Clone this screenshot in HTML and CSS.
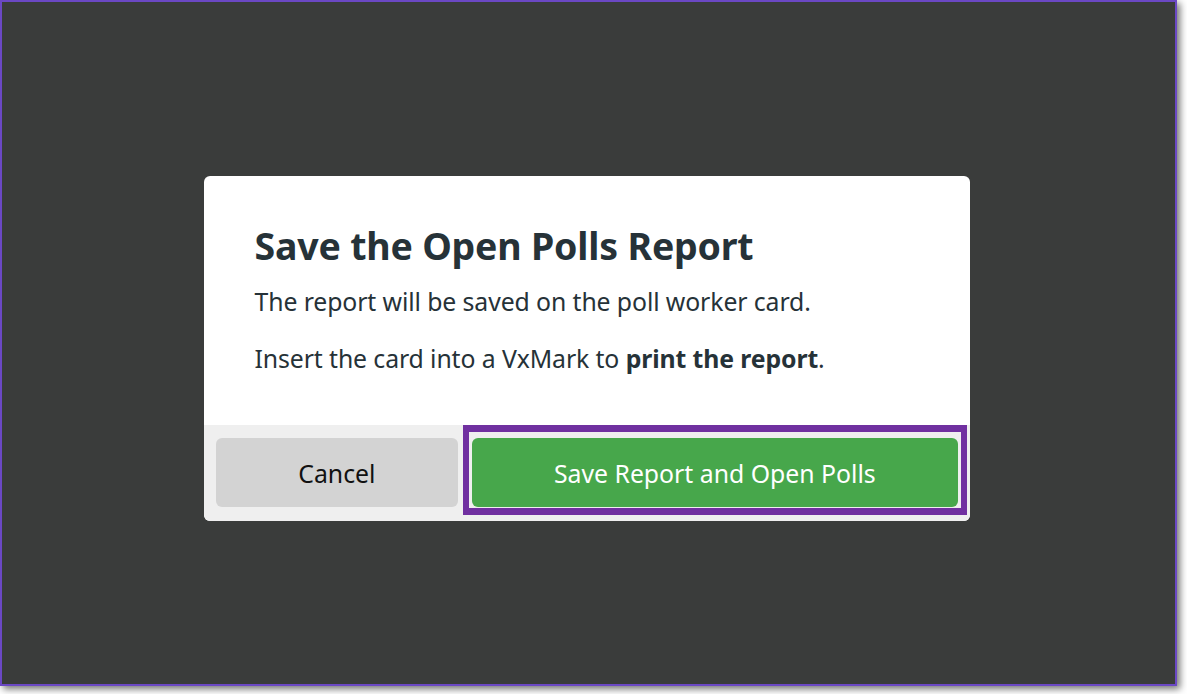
FILE: index.html
```html
<!DOCTYPE html>
<html lang="en">
<head>
<meta charset="utf-8">
<title>Save the Open Polls Report</title>
<link rel="stylesheet" href="styles.css">
</head>
<body>
<div class="frame">
  <div class="modal" role="dialog">
    <div class="modal-content">
      <h1 class="title">Save the Open Polls Report</h1>
      <p class="text">The report will be saved on the poll worker card.</p>
      <p class="text">Insert the card into a VxMark to <strong>print the report</strong>.</p>
    </div>
    <div class="modal-actions">
      <button class="btn btn-cancel" type="button">Cancel</button>
      <button class="btn btn-primary is-focused" type="button">Save Report and Open Polls</button>
    </div>
  </div>
</div>
</body>
</html>
```

FILE: styles.css
```css
* { box-sizing: border-box; }

html, body {
  margin: 0;
  padding: 0;
  background: #ffffff;
}

body {
  width: 1187px;
  height: 694px;
  font-family: "Noto Sans", "Open Sans", "DejaVu Sans", sans-serif;
}

.frame {
  width: 1177px;
  height: 686px;
  background: #3a3c3b;
  border: 2px solid #6b48c4;
  box-shadow: 3px 3px 7px rgba(0, 0, 0, 0.55);
  display: flex;
  justify-content: center;
  align-items: flex-start;
  padding-top: 174px;
}

.modal {
  width: 766px;
  margin-left: -4px;
  background: #ffffff;
  border-radius: 6px;
  overflow: hidden;
  display: flex;
  flex-direction: column;
}

.modal-content {
  padding: 45px 51px 51px;
  color: #263238;
}

.title {
  margin: 0 0 14px;
  font-size: 37.5px;
  line-height: 50px;
  font-weight: 700;
  letter-spacing: -0.2px;
}

.text {
  margin: 0;
  font-size: 24.8px;
  line-height: 32px;
  letter-spacing: -0.1px;
}

.text + .text {
  margin-top: 25px;
}

.text strong {
  font-weight: 700;
}

.modal-actions {
  background: #efefef;
  padding: 13px 12px 14px;
  display: flex;
  gap: 14px;
}

.btn {
  font-family: inherit;
  font-size: 24.8px;
  height: 69px;
  border-radius: 6px;
  border: none;
  padding: 0;
  cursor: pointer;
  min-width: 0;
}

.btn-cancel {
  flex: 1;
  background: #d3d3d3;
  color: #111111;
}

.btn-primary {
  flex: 2;
  background: #47a74b;
  color: #ffffff;
  position: relative;
}

.is-focused::after {
  content: "";
  position: absolute;
  top: -13px;
  bottom: -8px;
  left: -9px;
  right: -9px;
  border-style: solid;
  border-color: #7030a0;
  border-width: 7px 6px 7px 6px;
  pointer-events: none;
}
```
